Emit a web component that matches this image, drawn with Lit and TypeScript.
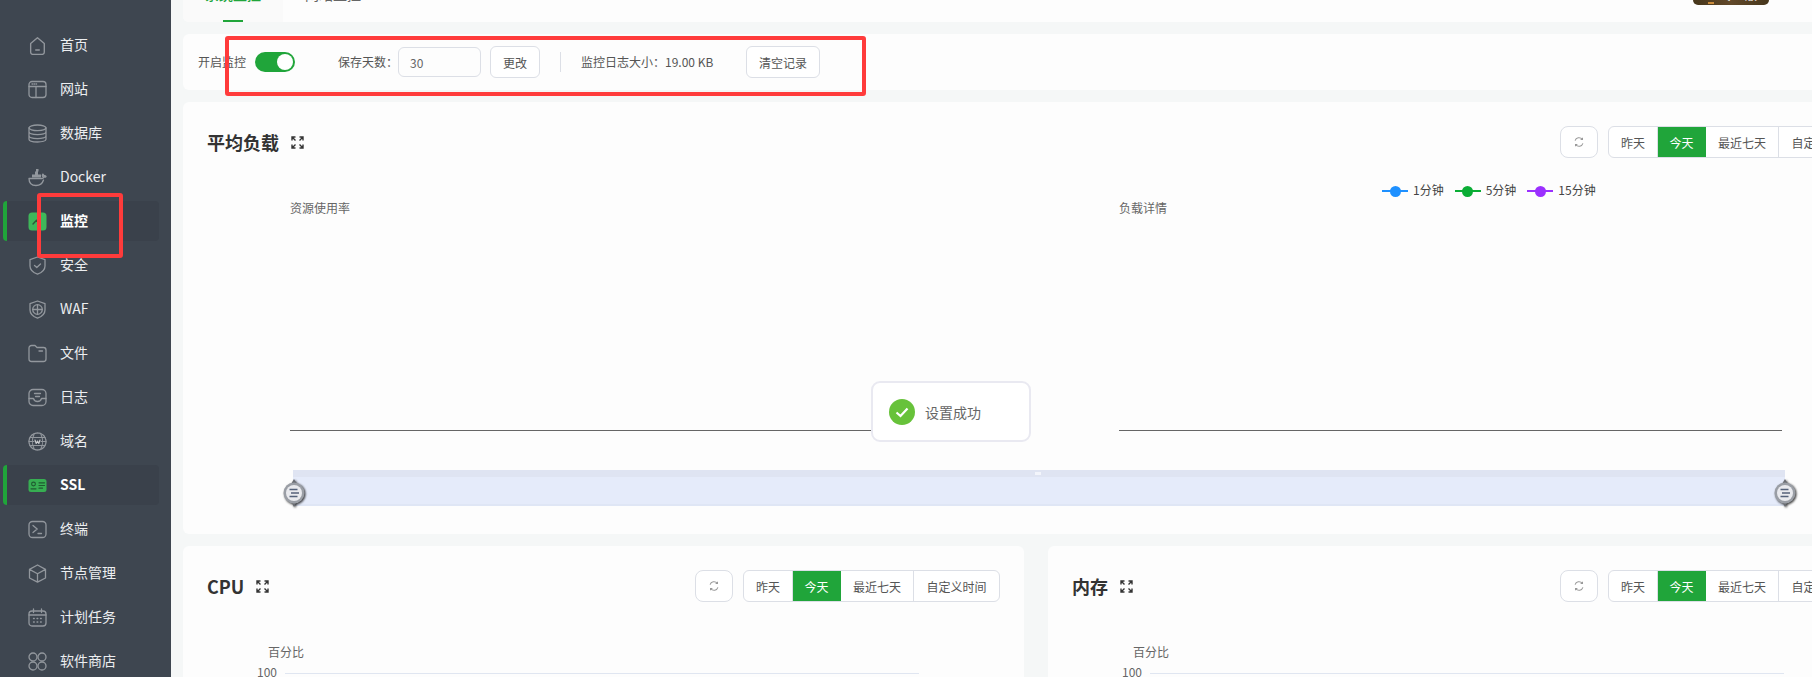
import { LitElement, css, html, svg } from 'lit';
import { customElement } from 'lit/decorators.js';
import { classMap } from 'lit/directives/class-map.js';

const icons: Record<string, unknown> = {
  home: svg`<path d="M3 7.2 9.5 1.6 16 7.2V15.5A2 2 0 0 1 14 17.5H5A2 2 0 0 1 3 15.500Z" transform="translate(-.5 0) scale(1.05)"/><path d="M7.700 14h3.600"/>`,
  site: svg`<rect x="1" y="1.500" width="17" height="16" rx="3"/><path d="M1 6.500h17M8 6.500v11M4 4h.6M6 4h.6M8 4h.6"/>`,
  db: svg`<ellipse cx="9.500" cy="3.800" rx="8.500" ry="2.800"/><path d="M1 3.800v11.400c0 1.600 3.800 2.800 8.500 2.800s8.500-1.200 8.500-2.800V3.800M1 7.800c0 1.600 3.800 2.800 8.500 2.800s8.500-1.200 8.500-2.800M1 11.800c0 1.600 3.800 2.800 8.500 2.800s8.500-1.200 8.500-2.800"/>`,
  docker: svg`<path d="M1 10.500h13c1 0 1.500-.7 1.800-1.500.8.300 1.700.2 2.200-.5-.5-.7-1.300-.9-2.100-.6-.1-.8-.5-1.400-1.100-1.800-.5.7-.6 1.500-.2 2.400M1 10.500c0 4.500 2.800 7 7 7 3.600 0 6.400-1.700 7.500-5.500"/><path d="M4 6.500h9v3H4zM7 3.500h3v3H7zM8 1h2.500v2.500H8z" fill="#92979d" stroke="none"/>`,
  monitor: svg`<rect x=".5" y=".5" width="18" height="18" rx="3.500" fill="#3fb75a" stroke="none"/><path d="M5 12 8.500 8.200 11 10.500" stroke="#2c5a3a" stroke-width="1.400"/>`,
  shield: svg`<path d="M9.500 1 17 3.600V10c0 4-3.400 6.700-7.500 8.200C5.400 16.700 2 14 2 10V3.600Z"/><path d="M6.500 9.500 8.800 11.500 12.500 8"/>`,
  waf: svg`<path d="M9.500 1 17 3.600V10c0 4-3.400 6.700-7.500 8.200C5.400 16.700 2 14 2 10V3.600Z"/><circle cx="9.500" cy="9.500" r="4.800"/><path d="M4.700 9.500h9.600M9.500 4.700v9.600"/>`,
  folder: svg`<path d="M1 4A2.500 2.500 0 0 1 3.500 1.500H7L9 3.500H15.500A2.500 2.500 0 0 1 18 6V15A2.500 2.500 0 0 1 15.500 17.500H3.500A2.500 2.500 0 0 1 1 15Z"/><path d="M11 7h3.500"/>`,
  log: svg`<rect x="1" y="1.500" width="17" height="16" rx="4"/><path d="M1 10.500h4.500c.5 2 2 3 4 3s3.500-1 4-3H18M6.500 5.500h6M7.500 8.500h4"/>`,
  domain: svg`<circle cx="9.500" cy="9.500" r="8.500" stroke-dasharray="1.500 .7"/><path d="M2 5.500h15M2 13.500h15M1 9.500h5M13 9.500h5M6 2.500c-2 4-2 10 0 14M13 2.500c2 4 2 10 0 14" stroke-width="1.100"/><path d="M7 8 8.200 11.500 9.500 9 10.800 11.500 12 8" stroke="#c8cacd" stroke-width="1.100"/>`,
  ssl: svg`<rect x=".5" y="3" width="18" height="13" rx="2.500" fill="#37ae52" stroke="none"/><circle cx="5.500" cy="8" r="1.900" stroke="#1f5b30" stroke-width="1.100"/><path d="M3 12.800h5M11 6.800h5.500M11 9.500h5.500M11 12.200h3.500" stroke="#1f5b30" stroke-width="1.200"/>`,
  terminal: svg`<rect x="1" y="1.500" width="17" height="16" rx="3.500"/><path d="M5 5.500 9.200 9 5 12.500M10 13.500h3.500"/>`,
  cube: svg`<path d="M9.500 1 17.500 5.400V14L9.500 18.200 1.500 14V5.400ZM1.500 5.400 9.500 9.800 17.500 5.400M9.500 9.800V18.200"/>`,
  plan: svg`<rect x="1" y="3" width="17" height="15" rx="3"/><path d="M1 7h17M5.500 1v3.500M13.500 1v3.500M5.500 10.500h.8M9 10.500h.8M12.500 10.500h.8M5.500 14h.8M9 14h.8M12.500 14h.8"/>`,
  apps: svg`<circle cx="5" cy="5" r="4"/><circle cx="14" cy="5" r="4"/><circle cx="5" cy="14" r="4"/><circle cx="14" cy="14" r="4"/>`,
};

const navItems = [
  { label: '首页', icon: 'home' },
  { label: '网站', icon: 'site' },
  { label: '数据库', icon: 'db' },
  { label: 'Docker', icon: 'docker' },
  { label: '监控', icon: 'monitor', active: true },
  { label: '安全', icon: 'shield' },
  { label: 'WAF', icon: 'waf' },
  { label: '文件', icon: 'folder' },
  { label: '日志', icon: 'log' },
  { label: '域名', icon: 'domain' },
  { label: 'SSL', icon: 'ssl', active: true },
  { label: '终端', icon: 'terminal' },
  { label: '节点管理', icon: 'cube' },
  { label: '计划任务', icon: 'plan' },
  { label: '软件商店', icon: 'apps' },
];

const legend = [
  { label: '1分钟', color: '#1e90ff' },
  { label: '5分钟', color: '#0aad35' },
  { label: '15分钟', color: '#9b30ff' },
];

const ranges = [
  { label: '昨天', width: 49 },
  { label: '今天', width: 48, on: true },
  { label: '最近七天', width: 73 },
  { label: '自定义时间', width: 85 },
];

@customElement('app-root')
export class AppRoot extends LitElement {
  static styles = css`
    :host {
      display: flex;
      position: relative;
      height: 100vh;
      overflow: hidden;
      background: #f5f7f7;
      color: #555;
      font-family: 'Noto Sans CJK SC', 'Noto Sans', sans-serif;
      font-size: 12px;
    }
    .side {
      flex: 0 0 171px;
      padding-top: 25px;
      box-sizing: border-box;
      background: #3e4650;
      display: flex;
      flex-direction: column;
      gap: 4px;
    }
    .nav {
      display: flex;
      align-items: center;
      gap: 13px;
      flex: 0 0 40px;
      width: 156px;
      margin-left: 3px;
      padding-left: 25px;
      box-sizing: border-box;
      border-radius: 4px;
      color: #eceef0;
      font-size: 14px;
    }
    .nav span {
      padding-bottom: 2px;
    }
    .nav.active {
      padding-left: 21px;
      border-left: 4px solid #20a53a;
      background: #3a414b;
      color: #fff;
      font-weight: 700;
    }
    .nav svg {
      flex: none;
      width: 19px;
      height: 19px;
      fill: none;
      stroke: #92979d;
      stroke-width: 1.300;
      stroke-linecap: round;
      stroke-linejoin: round;
    }
    .main {
      flex: 1;
      min-width: 0;
      padding-left: 12px;
      overflow: hidden;
    }
    .content {
      width: 1706px;
      display: flex;
      flex-direction: column;
      gap: 12px;
    }
    .card {
      background: #fdfdfd;
      border-radius: 6px;
    }
    .top {
      height: 22px;
      display: flex;
      overflow: hidden;
      border-radius: 0 0 6px 6px;
    }
    .tab {
      width: 100px;
      box-sizing: border-box;
      display: flex;
      flex-direction: column;
      justify-content: flex-end;
      align-items: center;
      flex: none;
      font-size: 14px;
      line-height: 16px;
      color: #666;
    }
    .tab span {
      flex: none;
    }
    .tab.on {
      background: #fafafa;
      color: #20a53a;
      font-weight: 500;
    }
    .tab i {
      flex: none;
      width: 20px;
      height: 2px;
      margin-top: 18px;
      background: transparent;
    }
    .tab.on i {
      background: #20a53a;
    }
    .tab.second {
      width: 100px;
      margin-left: 22px;
      align-items: flex-start;
    }
    .pro {
      align-self: flex-start;
      width: 76px;
      height: 5px;
      margin-left: auto;
      margin-right: 120px;
      padding: 0 0 3px 15px;
      box-sizing: border-box;
      border-radius: 0 0 6px 6px;
      background: linear-gradient(90deg, #46361b, #62492a 50%, #46361b);
      color: #fff;
      font-size: 12px;
      line-height: 14px;
      overflow: hidden;
      display: flex;
      align-items: flex-end;
      gap: 7px;
    }
    .pro i {
      flex: none;
      width: 6px;
      height: 2px;
      margin-bottom: -2px;
      background: #c98a3a;
    }
    .pro span {
      flex: none;
    }
    .bar {
      height: 56px;
      padding-left: 15px;
      display: flex;
      align-items: center;
    }
    .bar > span {
      padding-bottom: 2px;
    }
    .toggle {
      width: 40px;
      height: 20px;
      margin: 0 43px 0 9px;
      padding: 2px;
      box-sizing: border-box;
      border-radius: 10px;
      background: #20a53a;
      display: flex;
      justify-content: flex-end;
    }
    .toggle i {
      width: 16px;
      height: 16px;
      border-radius: 50%;
      background: #fff;
    }
    .input {
      width: 83px;
      height: 30px;
      margin-right: 9px;
      padding-left: 11px;
      box-sizing: border-box;
      border: 1px solid #dcdfe6;
      border-radius: 6px;
      display: flex;
      align-items: center;
      color: #666;
    }
    .btn {
      height: 32px;
      box-sizing: border-box;
      border: 1px solid #dcdfe6;
      border-radius: 6px;
      display: flex;
      align-items: center;
      justify-content: center;
      background: #fff;
      color: #555;
    }
    .btn.change { width: 50px; }
    .btn.clear { width: 74px; margin-left: 31px; }
    .divider {
      width: 1px;
      height: 20px;
      margin: 0 20px;
      background: #dcdfe6;
    }
    .size { width: 134px; white-space: nowrap; }
    .panel {
      padding: 24px 24px 0;
      box-sizing: border-box;
    }
    .panel.load { padding-bottom: 28px; }
    .panel.half { flex: 0 0 841px; height: 200px; }
    .head {
      display: flex;
      align-items: center;
      height: 32px;
    }
    .title {
      display: flex;
      align-items: center;
      gap: 12px;
      font-size: 18px;
      font-weight: 700;
      color: #333;
    }
    .title svg {
      width: 13px;
      height: 13px;
      fill: none;
      stroke: #333;
      stroke-width: 1.400;
    }
    .refresh {
      width: 38px;
      margin-left: auto;
      margin-right: 10px;
      border-radius: 8px;
    }
    .refresh svg {
      width: 10px;
      height: 10px;
      fill: none;
      stroke: #999;
      stroke-width: 1.200;
    }
    .seg {
      flex: none;
      display: flex;
      height: 32px;
      box-sizing: border-box;
      border: 1px solid #dcdfe6;
      border-radius: 6px;
      overflow: hidden;
      background: #fff;
    }
    .seg span {
      display: flex;
      align-items: center;
      justify-content: center;
      box-sizing: border-box;
      border-right: 1px solid #dcdfe6;
      color: #555;
    }
    .seg span:last-child { border-right: 0; }
    .seg span.on {
      background: #20a53a;
      border-right-color: #20a53a;
      color: #fff;
      margin: -1px 0;
    }
    .legend {
      display: flex;
      height: 16px;
      margin: 25px 0 0 1175px;
      align-items: center;
      gap: 11px;
      color: #444;
      white-space: nowrap;
    }
    .key {
      display: flex;
      align-items: center;
      gap: 5px;
    }
    .key span {
      padding-bottom: 3px;
    }
    .key b {
      flex: none;
      width: 26px;
      height: 2px;
      display: flex;
      justify-content: center;
      align-items: center;
    }
    .key b::after {
      content: '';
      width: 11px;
      height: 11px;
      border-radius: 50%;
      background: inherit;
      flex: none;
    }
    .charts {
      display: flex;
      margin: 1px 0 0 83px;
    }
    .chart { flex: 0 0 829px; }
    .chart-name {
      line-height: 16px;
      color: #666;
    }
    .axis {
      width: 663px;
      height: 1px;
      margin-top: 214px;
      background: #666;
    }
    .zoom {
      position: relative;
      width: 1492px;
      height: 36px;
      margin: 39px 0 0 86px;
      background: #e5ebfa;
      border-bottom: 2px solid #dfe6f5;
      box-sizing: border-box;
    }
    .zoom .strip {
      height: 7px;
      background: #dfe4f2;
    }
    .zoom .grip {
      position: absolute;
      left: 742px;
      top: 2px;
      width: 6px;
      height: 3px;
      background: #f3f5fb;
    }
    .handle {
      position: absolute;
      top: 9px;
      width: 25px;
      height: 28px;
      filter: drop-shadow(1.500px 1.500px 1px rgba(0, 0, 0, 0.8));
    }
    .handle.l { left: -11px; }
    .handle.r { right: -13px; }
    .pct {
      margin: 42px 0 0 61px;
      line-height: 16px;
      color: #666;
    }
    .row {
      display: flex;
      align-items: center;
      gap: 8px;
      margin: 4px 0 0 50px;
      color: #666;
      line-height: 16px;
    }
    .row i {
      width: 634px;
      height: 1px;
      margin-top: 2px;
      background: #e0e6f1;
    }
    .split {
      display: flex;
      gap: 24px;
    }
    .toast {
      position: absolute;
      left: 871px;
      top: 381px;
      width: 160px;
      height: 61px;
      box-sizing: border-box;
      padding-left: 16px;
      border: 2px solid #e9e9f1;
      border-radius: 9px;
      background: #fff;
      display: flex;
      align-items: center;
      gap: 10px;
      color: #666;
      font-size: 14px;
    }
    .toast svg { width: 26px; height: 26px; }
    .mark {
      position: absolute;
      box-sizing: border-box;
      border: 4px solid #ff3b3b;
      border-radius: 3px;
    }
    .mark.one { left: 225px; top: 36px; width: 641px; height: 60px; }
    .mark.two { left: 37px; top: 193px; width: 86px; height: 65px; }
  `;

  private expand() {
    return html`<svg viewBox="0 0 13 13"><path d="M1 4.500V1H4.500M8.500 1H12V4.500M12 8.500V12H8.500M4.500 12H1V8.500M1 1 4.500 4.500M12 1 8.500 4.500M12 12 8.500 8.500M1 12 4.500 8.500"/></svg>`;
  }

  private tools() {
    return html`
      <div class="btn refresh">
        <svg viewBox="0 0 11 11"><path d="M1.200 4A4.500 4.500 0 0 1 9 2.500M9.800 7A4.500 4.500 0 0 1 2 8.500M9.300 .8V2.800H7.300M1.700 10.200V8.200H3.700"/></svg>
      </div>
      <div class="seg">
        ${ranges.map(
          (r) => html`<span class=${classMap({ on: !!r.on })} style="width:${r.width}px">${r.label}</span>`,
        )}
      </div>
    `;
  }

  private half(title: string) {
    return html`
      <section class="card panel half">
        <div class="head">
          <div class="title">${title} ${this.expand()}</div>
          ${this.tools()}
        </div>
        <div class="pct">百分比</div>
        <div class="row"><span>100</span><i></i></div>
      </section>
    `;
  }

  private handle(side: string) {
    return html`
      <svg class="handle ${side}" viewBox="0 0 25 28">
        <path d="M12 0 15 5H9Z M12 28 15 22H9Z" fill="#6a6d72"/>
        <circle cx="12" cy="14" r="10.500" fill="#9a9ea5"/>
        <circle cx="12" cy="14" r="8" fill="#e9eaee"/>
        <path d="M7.500 10.500h8M9 14h8M7.500 17.500h8" stroke="#55627a" stroke-width="1.500"/>
      </svg>
    `;
  }

  render() {
    return html`
      <aside class="side">
        ${navItems.map(
          (n) => html`
            <div class=${classMap({ nav: true, active: !!n.active })}>
              <svg viewBox="0 0 19 19">${icons[n.icon]}</svg>
              <span>${n.label}</span>
            </div>
          `,
        )}
      </aside>
      <main class="main">
        <div class="content">
          <div class="card top">
            <div class="tab on"><span>系统监控</span><i></i></div>
            <div class="tab second"><span>网站监控</span><i></i></div>
            <div class="pro"><i></i><span>专业版</span></div>
          </div>

          <div class="card bar">
            <span>开启监控</span>
            <div class="toggle"><i></i></div>
            <span>保存天数：</span>
            <div class="input">30</div>
            <div class="btn change">更改</div>
            <div class="divider"></div>
            <span class="size">监控日志大小：19.00 KB</span>
            <div class="btn clear">清空记录</div>
          </div>

          <section class="card panel load">
            <div class="head">
              <div class="title">平均负载 ${this.expand()}</div>
              ${this.tools()}
            </div>
            <div class="legend">
              ${legend.map(
                (l) => html`
                  <div class="key">
                    <b style="background:${l.color}"></b><span>${l.label}</span>
                  </div>
                `,
              )}
            </div>
            <div class="charts">
              <div class="chart"><div class="chart-name">资源使用率</div><div class="axis"></div></div>
              <div class="chart"><div class="chart-name">负载详情</div><div class="axis"></div></div>
            </div>
            <div class="zoom">
              <div class="strip"></div>
              <div class="grip"></div>
              ${this.handle('l')} ${this.handle('r')}
            </div>
          </section>

          <div class="split">${this.half('CPU')} ${this.half('内存')}</div>
        </div>
      </main>

      <div class="toast">
        <svg viewBox="0 0 26 26">
          <circle cx="13" cy="13" r="13" fill="#67c23a"/>
          <path d="M7.500 13.500 11.500 17 18.500 9.500" fill="none" stroke="#fff" stroke-width="2.200"/>
        </svg>
        <span>设置成功</span>
      </div>
      <div class="mark one"></div>
      <div class="mark two"></div>
    `;
  }
}
